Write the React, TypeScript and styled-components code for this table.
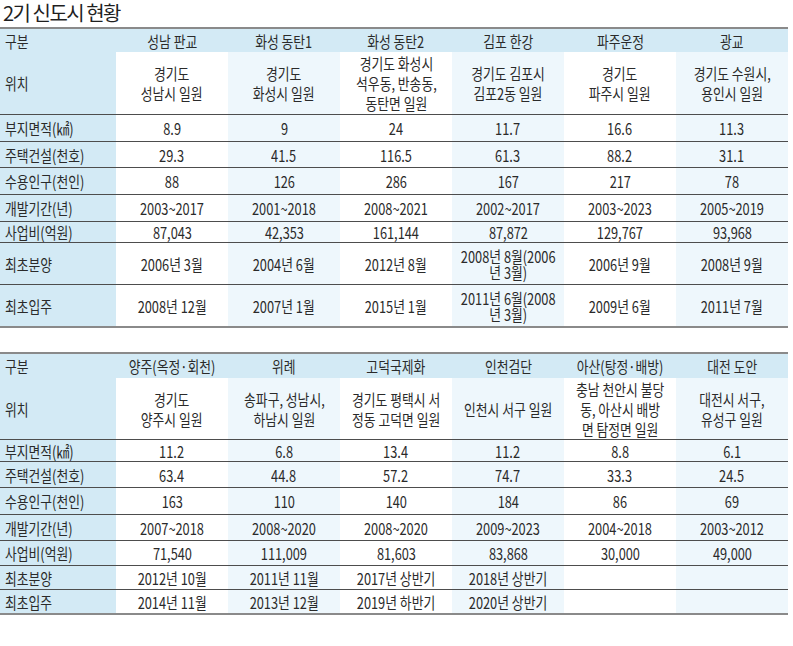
import React from "react";
import styled, { createGlobalStyle } from "styled-components";

const Global = createGlobalStyle`
  html, body { margin: 0; padding: 0; background: #ffffff; }
  body { font-family: "Noto Sans CJK KR", "Noto Sans", sans-serif; color: #2a2a2a; }
`;

const COLS = "116px repeat(6, 112px)";

const Page = styled.div`
  width: 793px;
  display: flex;
  flex-direction: column;
`;

const Title = styled.h1`
  margin: 0;
  box-sizing: border-box;
  height: 27px;
  padding: 2px 0 0 3px;
  font-size: 20px;
  font-weight: 400;
  letter-spacing: -1.5px;
  line-height: 22px;
  color: #1f1f1f;
  white-space: nowrap;
`;

const Table = styled.div<{ $gap?: number }>`
  width: 788px;
  margin-top: ${(p) => p.$gap ?? 0}px;
  border-top: 2px solid #8a8a8a;
  border-bottom: 2px solid #8a8a8a;
  display: flex;
  flex-direction: column;
`;

const Row = styled.div<{ $h: number; $line?: boolean }>`
  display: grid;
  grid-template-columns: ${COLS};
  height: ${(p) => p.$h}px;
  border-bottom: ${(p) => (p.$line ? "1px solid #4d4d4d" : "none")};
`;

const Cell = styled.div<{ $label?: boolean; $tint?: boolean; $head?: boolean; $lh: number }>`
  display: flex;
  align-items: center;
  justify-content: ${(p) => (p.$label ? "flex-start" : "center")};
  padding-left: ${(p) => (p.$label ? "5px" : "0")};
  background: ${(p) =>
    p.$label || p.$head ? "#d3eaf5" : p.$tint ? "#eef7fc" : "#ffffff"};
  font-size: 16px;
  line-height: ${(p) => p.$lh}px;
  text-align: ${(p) => (p.$label ? "left" : "center")};
  color: #2a2a2a;
`;

const Txt = styled.span<{ $left?: boolean }>`
  display: inline-block;
  white-space: pre;
  transform: scaleX(0.8);
  transform-origin: ${(p) => (p.$left ? "left center" : "center center")};
`;

type RowData = { label: string; cells: string[]; h: number; lh?: number };

type TableData = { header: string[]; headH: number; rows: RowData[] };

const t1: TableData = {
  header: ["구분", "성남 판교", "화성 동탄1", "화성 동탄2", "김포 한강", "파주운정", "광교"],
  headH: 23,
  rows: [
    {
      label: "위치",
      h: 62,
      lh: 20,
      cells: [
        "경기도\n성남시 일원",
        "경기도\n화성시 일원",
        "경기도 화성시\n석우동, 반송동,\n동탄면 일원",
        "경기도 김포시\n김포2동 일원",
        "경기도\n파주시 일원",
        "경기도 수원시,\n용인시 일원",
      ],
    },
    { label: "부지면적(㎢)", h: 26, cells: ["8.9", "9", "24", "11.7", "16.6", "11.3"] },
    { label: "주택건설(천호)", h: 25, cells: ["29.3", "41.5", "116.5", "61.3", "88.2", "31.1"] },
    { label: "수용인구(천인)", h: 26, cells: ["88", "126", "286", "167", "217", "78"] },
    {
      label: "개발기간(년)",
      h: 26,
      cells: ["2003~2017", "2001~2018", "2008~2021", "2002~2017", "2003~2023", "2005~2019"],
    },
    {
      label: "사업비(억원)",
      h: 20,
      cells: ["87,043", "42,353", "161,144", "87,872", "129,767", "93,968"],
    },
    {
      label: "최초분양",
      h: 41,
      lh: 16,
      cells: ["2006년 3월", "2004년 6월", "2012년 8월", "2008년 8월(2006\n년 3월)", "2006년 9월", "2008년 9월"],
    },
    {
      label: "최초입주",
      h: 41,
      lh: 16,
      cells: ["2008년 12월", "2007년 1월", "2015년 1월", "2011년 6월(2008\n년 3월)", "2009년 6월", "2011년 7월"],
    },
  ],
};

const t2: TableData = {
  header: ["구분", "양주(옥정·회천)", "위례", "고덕국제화", "인천검단", "아산(탕정·배방)", "대전 도안"],
  headH: 24,
  rows: [
    {
      label: "위치",
      h: 61,
      lh: 20,
      cells: [
        "경기도\n양주시 일원",
        "송파구, 성남시,\n하남시 일원",
        "경기도 평택시 서\n정동 고덕면 일원",
        "인천시 서구 일원",
        "충남 천안시 불당\n동, 아산시 배방\n면 탐정면 일원",
        "대전시 서구,\n유성구 일원",
      ],
    },
    { label: "부지면적(㎢)", h: 21, cells: ["11.2", "6.8", "13.4", "11.2", "8.8", "6.1"] },
    { label: "주택건설(천호)", h: 25, cells: ["63.4", "44.8", "57.2", "74.7", "33.3", "24.5"] },
    { label: "수용인구(천인)", h: 26, cells: ["163", "110", "140", "184", "86", "69"] },
    {
      label: "개발기간(년)",
      h: 25,
      cells: ["2007~2018", "2008~2020", "2008~2020", "2009~2023", "2004~2018", "2003~2012"],
    },
    {
      label: "사업비(억원)",
      h: 24,
      cells: ["71,540", "111,009", "81,603", "83,868", "30,000", "49,000"],
    },
    {
      label: "최초분양",
      h: 23,
      cells: ["2012년 10월", "2011년 11월", "2017년 상반기", "2018년 상반기", "", ""],
    },
    {
      label: "최초입주",
      h: 23,
      cells: ["2014년 11월", "2013년 12월", "2019년 하반기", "2020년 상반기", "", ""],
    },
  ],
};

function DataTable({ data, gap }: { data: TableData; gap?: number }) {
  return (
    <Table $gap={gap}>
      <Row $h={data.headH}>
        {data.header.map((h, i) => (
          <Cell key={i} $head $label={i === 0} $lh={18}>
            <Txt $left={i === 0}>{h}</Txt>
          </Cell>
        ))}
      </Row>
      {data.rows.map((r, ri) => (
        <Row key={ri} $h={r.h} $line={ri < data.rows.length - 1}>
          <Cell $label $lh={18}>
            <Txt $left>{r.label}</Txt>
          </Cell>
          {r.cells.map((c, ci) => (
            <Cell key={ci} $tint={ci % 2 === 1} $lh={r.lh ?? 18}>
              <Txt>{c}</Txt>
            </Cell>
          ))}
        </Row>
      ))}
    </Table>
  );
}

export default function App() {
  return (
    <Page>
      <Global />
      <Title>2기 신도시 현황</Title>
      <DataTable data={t1} />
      <DataTable data={t2} gap={24} />
    </Page>
  );
}
